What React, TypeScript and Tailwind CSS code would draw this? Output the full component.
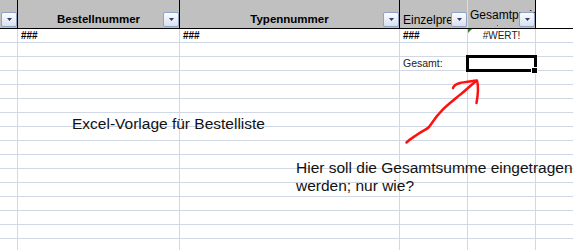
import React from "react";

function DropBtn() {
  return (
    <div className="absolute right-0 bottom-[1px] w-[16px] h-[15px] rounded-[2px] border border-[#8fa3c4] bg-gradient-to-b from-[#fbfcfe] to-[#d9e1ee] flex items-center justify-center">
      <svg width="5" height="3" viewBox="0 0 5 3">
        <path d="M0 0H5L2.5 3Z" fill="#2c3d6e" />
      </svg>
    </div>
  );
}

const ROWS = Array.from({ length: 16 }, (_, i) => i);

export default function App() {
  return (
    <div
      className="relative w-[573px] h-[250px] overflow-hidden bg-white text-black"
      style={{ fontFamily: '"Liberation Sans", Arial, sans-serif' }}
    >
      {/* header */}
      <div className="flex h-[29px] border-b border-black bg-[#c0c0c0]">
        <div className="relative w-[18px] shrink-0 border-r border-black">
          <DropBtn />
        </div>
        <div className="relative w-[162px] shrink-0 border-r border-black flex items-end justify-center pb-[2px]">
          <span className="font-bold text-[11.5px] leading-[13px]">Bestellnummer</span>
          <DropBtn />
        </div>
        <div className="relative w-[220px] shrink-0 border-r border-black flex items-end justify-center pb-[2px]">
          <span className="font-bold text-[11.5px] leading-[13px]">Typennummer</span>
          <DropBtn />
        </div>
        <div className="relative w-[68px] shrink-0 border-r border-[#dcdcdc] overflow-hidden">
          <span className="absolute left-[3px] bottom-[1px] text-[12px] leading-[14px] whitespace-nowrap">
            Einzelpreis
          </span>
          <DropBtn />
        </div>
        <div className="relative w-[68px] shrink-0 border-r border-black overflow-hidden">
          <span className="absolute left-[2px] top-[8px] text-[12px] leading-[14px] whitespace-nowrap">
            Gesamtpreis
          </span>
          <div className="absolute left-[29px] top-[25px] w-[1px] h-[1px] bg-[#555]" />
          <DropBtn />
        </div>
        <div className="flex-1 bg-white" />
      </div>

      {/* rows */}
      {ROWS.map((r) => (
        <div key={r} className="flex h-[14px] border-b border-[#d0d7e5] text-[10px] leading-[13px]">
          <div className="w-[18px] shrink-0 border-r border-[#d0d7e5]" />
          <div className="w-[162px] shrink-0 border-r border-[#d0d7e5] pl-[3px] font-bold">
            {r === 0 ? "###" : ""}
          </div>
          <div className="w-[220px] shrink-0 border-r border-[#d0d7e5] pl-[3px] font-bold">
            {r === 0 ? "###" : ""}
          </div>
          <div className="w-[68px] shrink-0 border-r border-[#d0d7e5] pl-[3px] whitespace-nowrap">
            {r === 0 ? <span className="font-bold">###</span> : r === 2 ? <span className="text-[10.5px] text-[#222]">Gesamt:</span> : ""}
          </div>
          <div className="relative w-[68px] shrink-0 border-r border-[#d0d7e5] text-center text-[#222]">
            {r === 0 && (
              <>
                <svg className="absolute left-0 top-0" width="4" height="4" viewBox="0 0 4 4">
                  <path d="M0 0H4L0 4Z" fill="#2e8b2e" />
                </svg>
                #WERT!
              </>
            )}
          </div>
          <div className="flex-1" />
        </div>
      ))}

      {/* selection */}
      <div className="absolute left-[466px] top-[55px] w-[71px] h-[17px] border-[3px] border-black" />
      <div className="absolute left-[531px] top-[67px] w-[7px] h-[7px] bg-white flex items-center justify-center">
        <div className="w-[5px] h-[5px] bg-black" />
      </div>

      {/* arrow */}
      <svg className="absolute left-0 top-0" width="573" height="250" viewBox="0 0 573 250" fill="none">
        <path
          d="M406.5 142.5 C410 139 414 137 418 134 C422 131 426 130 429 127 C432 123 434 120 437 116 C441 111 445 107 450 103 C454 100 457 97 461 94 C466 90 470 86 475 82"
          stroke="#ff1010"
          strokeWidth="2.5"
          strokeLinecap="round"
          strokeLinejoin="round"
        />
        <path
          d="M453 88 C454 85 456 84 460 83 C466 82 471 81 477 80.5 C478.5 86 478 95 476.5 103"
          stroke="#ff1010"
          strokeWidth="2.5"
          strokeLinecap="round"
          strokeLinejoin="round"
        />
      </svg>

      {/* text boxes */}
      <div className="absolute left-[72px] top-[115px] text-[15.5px] leading-[18px] text-[#111] whitespace-nowrap">
        Excel-Vorlage für Bestelliste
      </div>
      <div className="absolute left-[296px] top-[159px] text-[15.5px] leading-[17.5px] text-[#111] whitespace-nowrap">
        Hier soll die Gesamtsumme eingetragen
        <br />
        werden; nur wie?
      </div>
    </div>
  );
}
